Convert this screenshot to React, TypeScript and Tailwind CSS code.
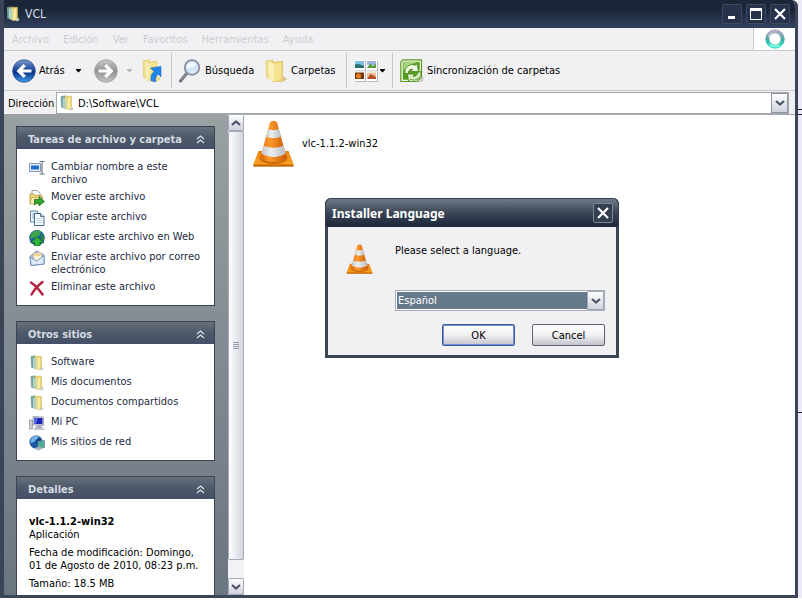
import React from "react";

type IconProps = { className?: string };

const Cone = ({ className = "" }: IconProps) => (
  <svg className={className} viewBox="0 0 41 47" aria-hidden="true">
    <defs>
      <linearGradient id="cone" x1="0" x2="1">
        <stop offset="0" stopColor="#d96a06" />
        <stop offset="0.35" stopColor="#fb9a2c" />
        <stop offset="1" stopColor="#c95a04" />
      </linearGradient>
      <linearGradient id="coneBase" x1="0" x2="0" y1="0" y2="1">
        <stop offset="0" stopColor="#e98312" />
        <stop offset="1" stopColor="#fba524" />
      </linearGradient>
      <linearGradient id="coneBand" x1="0" x2="1">
        <stop offset="0" stopColor="#c3c7ca" />
        <stop offset="0.4" stopColor="#eceeef" />
        <stop offset="1" stopColor="#b9bdc1" />
      </linearGradient>
    </defs>
    <path d="M5.500 31h30L40.500 44v2.500H.500V44z" fill="url(#coneBase)" />
    <path d="M.5 44.500h40v2H.5z" fill="#c0640a" />
    <path d="M7.500 35c0 9 26 9 26 0l1 3c-1 8-27 8-28 0z" fill="#cf6a0a" />
    <path d="M16.800 3c1-3 6.400-3 7.400 0l9.300 34c-2 6-24 6-26 0z" fill="url(#cone)" />
    <path d="M15.200 9c3 1.500 7.700 1.500 10.600 0l2.200 7.500c-4 2.300-11 2.300-15 0z" fill="url(#coneBand)" />
    <path d="M10.600 25.500c5 3 15 3 19.900 0l2.200 8c-6 4.500-18 4.500-24.200 0z" fill="url(#coneBand)" />
  </svg>
);

const OpenFolder = ({ className = "" }: IconProps) => (
  <svg className={className} viewBox="0 0 16 16" aria-hidden="true">
    <path d="M2 1.500 6 .8v12.500l-3.500-1z" fill="#79a692" stroke="#5f8c80" strokeWidth=".5" />
    <path d="M4 2.500 6.500 3v10.500L4 12.500z" fill="#a9d3e6" />
    <path d="M6 1.200h6.500V12l1.800 1.500-1.800 1.500L6 13.500z" fill="#eed374" stroke="#cdb05a" strokeWidth=".5" />
    <path d="M6 2.500 8.500 4v11L6 13.500z" fill="#c9d9a2" />
    <path d="M8.500 4 11 2.500v10.500l-2.500 2z" fill="#fbeda0" />
    <path d="M11 12.500h2.800v2.300H11z" fill="#bcd3d4" />
  </svg>
);

const BigFolder = ({ className = "" }: IconProps) => (
  <svg className={className} viewBox="0 0 22 24" aria-hidden="true">
    <path d="M1 2l7-1.200V20l-3 .5L1.500 18z" fill="#f3de88" stroke="#dcc56c" strokeWidth=".6" />
    <path d="M7 3.500 17.500 2v15l4 3-4 2.500L7 22.500z" fill="#efd878" stroke="#d3b758" strokeWidth=".6" />
    <path d="M3 3.500C6 3 8 4 9 5.500v17L4 21z" fill="#faf0b8" />
    <path d="M9 5.500 16 4v15l-7 3.500z" fill="#f6e490" />
    <path d="M17.500 17l4 3-4 2.500z" fill="#d9bb98" />
  </svg>
);

const UpFolder = ({ className = "" }: IconProps) => (
  <svg className={className} viewBox="0 0 20 24" aria-hidden="true">
    <path d="M1 2l6-1.200V20l-2.500.5L1.500 18z" fill="#f3de88" stroke="#dcc56c" strokeWidth=".6" />
    <path d="M6 3.500 15 2v15l3 3-3 2H6z" fill="#f6e38e" stroke="#d3b758" strokeWidth=".6" />
    <path d="M3 3.500C5 3 7 4 7.500 5.500v17L4 21z" fill="#f4edb4" />
    <path d="M8.500 9 19 7.500v10.500l-3-3c-2 2-2.500 4-2.500 8l-4.500-1.500c-.5-4 .5-7 3-9z" fill="#1e86ea" stroke="#0f5cb4" strokeWidth=".5" />
  </svg>
);

const RoundArrow = ({ className = "", forward = false }: IconProps & { forward?: boolean }) => (
  <svg className={className} viewBox="0 0 24 24" aria-hidden="true">
    <defs>
      <linearGradient id="backBall" x1="0" x2="0" y1="0" y2="1">
        <stop offset="0" stopColor="#7f9cca" />
        <stop offset="0.4" stopColor="#2450a0" />
        <stop offset="0.55" stopColor="#0a2f84" />
        <stop offset="1" stopColor="#3fa4f4" />
      </linearGradient>
      <linearGradient id="forwardBall" x1="0" x2="0" y1="0" y2="1">
        <stop offset="0" stopColor="#cacaca" />
        <stop offset="0.5" stopColor="#929292" />
        <stop offset="1" stopColor="#c4c4c4" />
      </linearGradient>
    </defs>
    <circle cx="12" cy="12" r="11.300" fill={forward ? "url(#forwardBall)" : "url(#backBall)"} stroke={forward ? "#9a9a9a" : "#2c4f8f"} strokeWidth=".8" />
    <path
      d={forward ? "M12.500 5 19.500 12l-7 7-2.400-2.200 3.200-3.200H4.500v-3.200h8.800l-3.200-3.200z" : "M11.500 5 4.500 12l7 7 2.400-2.200-3.200-3.200h8.800v-3.200h-8.800l3.200-3.200z"}
      fill="#fff"
    />
  </svg>
);

const Magnifier = ({ className = "" }: IconProps) => (
  <svg className={className} viewBox="0 0 22 24" aria-hidden="true">
    <path d="m8 14-6.500 8" stroke="#6d7076" strokeWidth="3" strokeLinecap="round" />
    <path d="m8 14-5.500 6.500" stroke="#a9abb0" strokeWidth="1" strokeLinecap="round" />
    <circle cx="13" cy="8.500" r="7.300" fill="#d4e7fa" stroke="#8d8f9c" strokeWidth="1.800" />
    <path d="M8 8.500a5 5 0 0 1 9-3c-2 2.500-5 3.500-9 3z" fill="#f5faff" />
  </svg>
);

const Views = ({ className = "" }: IconProps) => (
  <svg className={className} viewBox="0 0 24 22" aria-hidden="true">
    <path d="M1 1h11v10.500H1zM13 1h11v10.500H13zM1 12h11v10H1zM13 12h11v10H13z" fill="#b9b9bb" />
    <path d="M0 0h11v10.500H0zM12 0h11v10.500H12zM0 11.500h11V21H0zM12 11.500h11V21H12z" fill="#fff" />
    <path d="M1 1h9v4H1z" fill="#7cc3e0" />
    <path d="M1 4.500 4 4l6 1.500v2.500H1z" fill="#23706e" />
    <path d="M13 1h9v4h-9z" fill="#9db4e0" />
    <path d="m13 8 3.500-4.500L19 6l3-2.500V8z" fill="#589c3c" />
    <path d="M1 12.500h9V19H1z" fill="#7a3410" />
    <circle cx="4.500" cy="16" r="2.500" fill="#dd8420" />
    <path d="M13 12.500h9V19h-9z" fill="#ecc39c" />
    <path d="m13 19 3.500-5 5.500 3v2z" fill="#b9502a" />
  </svg>
);

const Sync = ({ className = "" }: IconProps) => (
  <svg className={className} viewBox="0 0 24 24" aria-hidden="true">
    <path d="M3 .8h18.500V18L17 22.500H.8V3z" fill="#f3f9e8" stroke="#5c9a24" strokeWidth="1.200" />
    <path d="M3.500 2.800h16.200V17l-3 3.800H2.800V3.500z" fill="#57a01f" />
    <path d="M3.500 3h16c-7 1-12 4-16 9z" fill="#a6d37a" />
    <path d="M5 14.500a7.500 7.500 0 0 1 10.500-8.300L17 4.500l1.500 8h-8l2-2.500a3.800 3.800 0 0 0-4 4.500z" fill="#eef7df" stroke="#397a12" strokeWidth=".7" />
    <path d="M21 12.500a7.500 7.500 0 0 1-10.500 8L8.500 22.500 7.500 15h7.500l-2 2.300a3.800 3.800 0 0 0 4.500-3.800z" fill="#d9edc0" stroke="#397a12" strokeWidth=".7" />
    <path d="m23.500 17-6 6.500 5.500-1z" fill="#c8c8c8" />
  </svg>
);

const Throbber = ({ className = "" }: IconProps) => (
  <svg className={className} viewBox="0 0 20 20" aria-hidden="true">
    <defs>
      <linearGradient id="ring" x1="0" x2="0" y1="0" y2="1">
        <stop offset="0" stopColor="#b3adc6" />
        <stop offset="0.45" stopColor="#55a3a2" />
        <stop offset="0.6" stopColor="#3db5ab" />
        <stop offset="1" stopColor="#3ce8cc" />
      </linearGradient>
    </defs>
    <circle cx="10" cy="10" r="7.700" fill="#fff" stroke="url(#ring)" strokeWidth="4" />
    <path d="M3.500 8a7 7 0 0 1 4-4.200" fill="none" stroke="#dcdce8" strokeWidth="1.200" />
    <path d="M5 15.500a7.500 7.500 0 0 0 9 .5" fill="none" stroke="#a8fbe8" strokeWidth="1.200" />
  </svg>
);

const Rename = ({ className = "" }: IconProps) => (
  <svg className={className} viewBox="0 0 16 16" aria-hidden="true">
    <path d="M.5 3.500h11v8H.5z" fill="#e8eef7" stroke="#8497b8" />
    <path d="M2 5.500h8v4H2z" fill="#1f6fd0" />
    <path d="M10.500 1.500h2l.5.500.5-.5h2M13 2v11.500M10.500 14h2l.5-.5.5.5h2" fill="none" stroke="#6a7484" strokeWidth="1.200" />
  </svg>
);

const Move = ({ className = "" }: IconProps) => (
  <svg className={className} viewBox="0 0 16 16" aria-hidden="true">
    <path d="M3 .5h5l3 2.500v6H3z" fill="#fff" stroke="#8a8f98" strokeWidth=".8" />
    <path d="M1 4h4l1 1.500h7v8H1z" fill="#f1da78" stroke="#b3923a" strokeWidth=".8" />
    <path d="M2.500 7.500H14l-2 6.500H1z" fill="#fbeeae" stroke="#b3923a" strokeWidth=".6" />
    <path d="M5.500 9.500H10V6.500l5.500 5-5.500 4.300v-2.500H7.500L5.500 15z" fill="#2fa52e" stroke="#13651a" strokeWidth=".7" />
  </svg>
);

const Copy = ({ className = "" }: IconProps) => (
  <svg className={className} viewBox="0 0 16 16" aria-hidden="true">
    <path d="M1.500 1h7v11h-7z" fill="#e4f1fb" stroke="#55799f" strokeWidth=".9" />
    <path d="M3 4h4M3 6h4M3 8h4" stroke="#8fb4d6" />
    <path d="M5.500 3.500h6l3.500 3v9H5.500z" fill="#f4fafe" stroke="#36587e" strokeWidth=".9" />
    <path d="M11.500 3.500v3H15" fill="#b5d2ea" stroke="#36587e" strokeWidth=".8" />
    <path d="M7 8.500h6M7 10.500h6M7 12.500h6" stroke="#c3d9ec" />
  </svg>
);

const Publish = ({ className = "" }: IconProps) => (
  <svg className={className} viewBox="0 0 16 16" aria-hidden="true">
    <circle cx="8" cy="7.800" r="7.500" fill="#1d5fae" stroke="#173f6d" strokeWidth=".5" />
    <path d="M2 4c3-4 8-4 10-2.500L11 5 8 7 4 8 1 9z" fill="#3fa54a" />
    <path d="m12 4 3 2v4l-3 1z" fill="#2c8a3c" />
    <path d="M8 6.500 15 13l-4-.5V16H5.500v-3.500L1.500 13z" fill="#2fb13a" stroke="#0e5d1c" strokeWidth=".7" />
  </svg>
);

const Mail = ({ className = "" }: IconProps) => (
  <svg className={className} viewBox="0 0 16 16" aria-hidden="true">
    <path d="M1 6.500 7.500 1l7.500 4v9L2 15.500z" fill="#a9c4ea" stroke="#6180ad" strokeWidth=".8" />
    <path d="M4 3.500 12 2.500l1 7-8 2z" fill="#fff6d2" stroke="#cda765" strokeWidth=".6" />
    <path d="M5.500 5h6" stroke="#e2ad55" />
    <path d="m1 7 6.500 4L15 5.500V14L2 15.500z" fill="#dce9fa" stroke="#6180ad" strokeWidth=".8" />
  </svg>
);

const Delete = ({ className = "" }: IconProps) => (
  <svg className={className} viewBox="0 0 16 16" aria-hidden="true">
    <path d="M2 2.500C6 5 10 9.500 13.500 14.500M13.500 2C9 5.500 5 10 2.500 14.500" fill="none" stroke="#b5213f" strokeWidth="2.400" strokeLinecap="round" />
  </svg>
);

const Computer = ({ className = "" }: IconProps) => (
  <svg className={className} viewBox="0 0 16 16" aria-hidden="true">
    <path d="M.5 5h3v9h-3z" fill="#c9ccd3" stroke="#7d828c" strokeWidth=".6" />
    <path d="M4 1.500 14.500 2v8.500L4 10z" fill="#dfe2ea" stroke="#878b99" strokeWidth=".7" />
    <path d="m5 2.700 8.500.3v6.300L5 9z" fill="#1a26b8" />
    <path d="m5 2.700 4 .1L7 9H5z" fill="#4f66e2" />
    <path d="M7.500 10.500h4l2.500 3-8 .5z" fill="#a8acb8" />
    <path d="m5 13.500 9-.5 1.500 1.500H5z" fill="#d9dbe2" stroke="#8d919c" strokeWidth=".4" />
  </svg>
);

const Network = ({ className = "" }: IconProps) => (
  <svg className={className} viewBox="0 0 16 16" aria-hidden="true">
    <circle cx="7" cy="7" r="6.300" fill="#1c58a8" stroke="#16386b" strokeWidth=".5" />
    <path d="M2 3.500C5 0 8 1 10 2L7 5 5 7 1 8z" fill="#6fb3e8" />
    <path d="m8 4 4-.5L11 8l-4 2z" fill="#123c80" />
    <path d="m9 6.500 6.500-1v7L9 13.500z" fill="#4fae96" stroke="#6c8d94" strokeWidth=".8" />
    <path d="m5.500 13 5-1.500 3 2.500-5 1.500z" fill="#a7b6c6" />
  </svg>
);

const Caret = ({ className = "" }: IconProps) => (
  <svg className={className} viewBox="0 0 7 4" fill="currentColor" aria-hidden="true">
    <path d="M1 0h5v1L3.500 3.500 1 1z" />
  </svg>
);

const Chevron = ({ className = "" }: IconProps) => (
  <svg className={className} viewBox="0 0 10 6" fill="none" stroke="#4a5468" strokeWidth="2.200" aria-hidden="true">
    <path d="m1 1 4 3.500L9 1" />
  </svg>
);

const CloseGlyph = ({ className = "" }: IconProps) => (
  <svg className={className} viewBox="0 0 12 12" fill="none" stroke="#fff" strokeWidth="2.200" aria-hidden="true">
    <path d="m1 1 10 10M11 1 1 11" />
  </svg>
);

const menus = ["Archivo", "Edición", "Ver", "Favoritos", "Herramientas", "Ayuda"];

const tasks = [
  { label: "Cambiar nombre a este archivo", icon: Rename },
  { label: "Mover este archivo", icon: Move },
  { label: "Copiar este archivo", icon: Copy },
  { label: "Publicar este archivo en Web", icon: Publish },
  { label: "Enviar este archivo por correo electrónico", icon: Mail },
  { label: "Eliminar este archivo", icon: Delete },
];

const places = [
  { label: "Software", icon: OpenFolder },
  { label: "Mis documentos", icon: OpenFolder },
  { label: "Documentos compartidos", icon: OpenFolder },
  { label: "Mi PC", icon: Computer },
  { label: "Mis sitios de red", icon: Network },
];

const Panel = ({ title, children }: { title: string; children: React.ReactNode }) => (
  <section className="shrink-0 border border-[#3a4454] bg-white">
    <h2>
      <button className="flex h-[22px] w-full items-center justify-between bg-linear-to-b from-[#67717c] via-[#4d5868] to-[#445068] pr-[9px] pl-[11px] pt-[2px] text-[11px] font-bold text-[#d5dbe2]">
        {title}
        <svg className="h-[9px] w-[9px]" viewBox="0 0 9 9" fill="none" stroke="#dfe4ea" strokeWidth="1.200" aria-hidden="true">
          <path d="m1 4 3.500-3L8 4M1 8l3.500-3L8 8" />
        </svg>
      </button>
    </h2>
    {children}
  </section>
);

const LinkList = ({ items }: { items: { label: string; icon: React.FC<IconProps> }[] }) => (
  <ul className="flex flex-col gap-1 pt-[11px] pr-2 pb-[9px] pl-3">
    {items.map(({ label, icon: Icon }) => (
      <li key={label}>
        <a href="#" className="flex gap-[6px] text-[#1d2a3f]">
          <Icon className="size-4 shrink-0" />
          <span>{label}</span>
        </a>
      </li>
    ))}
  </ul>
);

const Separator = () => <div className="h-[35px] w-px bg-[#c6c8cc]" />;

const titleButton = "flex size-5 items-center justify-center rounded-[2px] border border-[#3d4a62] bg-[#25324a]";
const scrollButton = "flex h-[17px] shrink-0 items-center justify-center rounded-[1px] border border-[#a3a9b8] bg-linear-to-b from-white to-[#cfd2dd]";
const dialogButton = "h-[22px] w-[73px] rounded-[2px] border bg-linear-to-b from-white via-[#f1f1f4] to-[#c3c5cd]";

const InstallerDialog = () => (
  <div
    role="dialog"
    aria-labelledby="installer-title"
    className="absolute top-[198px] left-[325px] w-[294px] rounded-t-md border-x-[3px] border-b-[3px] border-[#3c4654] bg-[#f1f1f4]"
  >
    <div className="-mx-[3px] flex h-[29px] items-center justify-between rounded-t-md border border-b-0 border-[#333d4c] bg-linear-to-b from-[#707984] via-[#3a4556] to-[#1b2739] pr-[5px] pl-[6px]">
      <h1 id="installer-title" className="font-['Noto_Sans'] text-[12px] font-bold text-white">
        Installer Language
      </h1>
      <button aria-label="Close" className="flex size-5 items-center justify-center rounded-[2px] border border-[#7b8593] bg-[#333e4f]">
        <CloseGlyph className="size-3" />
      </button>
    </div>
    <form className="flex gap-[22px] pt-[17px] pr-[11px] pb-[9px] pl-[18px]" onSubmit={(e) => e.preventDefault()}>
      <Cone className="h-[30px] w-[27px]" />
      <div className="flex-1">
        <label htmlFor="language" className="block">
          Please select a language.
        </label>
        <div className="relative mt-[33px]">
          <select
            id="language"
            className="block h-[21px] w-full appearance-none border border-[#a3abb8] bg-[#66798b] px-[2px] text-white shadow-[inset_0_0_0_1px_#fff]"
          >
            <option>Español</option>
          </select>
          <span className="pointer-events-none absolute inset-y-px right-px flex w-[17px] items-center justify-center border border-[#a3a9b8] bg-linear-to-b from-white to-[#cfd2dd]">
            <Chevron className="h-[6px] w-[10px]" />
          </span>
        </div>
        <div className="mt-[13px] flex justify-end gap-[17px]">
          <button type="submit" className={`${dialogButton} border-[#3d5a94] shadow-[inset_0_0_0_1px_#6f92d6]`}>
            OK
          </button>
          <button type="button" className={`${dialogButton} border-[#5c6370]`}>
            Cancel
          </button>
        </div>
      </div>
    </form>
  </div>
);

export default function App() {
  return (
    <div className="flex h-screen overflow-hidden bg-white font-['DejaVu_Sans_Condensed','DejaVu_Sans',sans-serif] text-[11px] leading-[13px] text-black">
      <div className="mb-[3px] flex min-w-0 flex-1 flex-col overflow-hidden rounded-tr-md border-r-[3px] border-b-[3px] border-l-[4px] border-[#3b455a]">
        {/* Title bar */}
        <header className="-mx-[3px] flex h-7 shrink-0 items-center justify-between bg-linear-to-b from-[#1b2739] from-40% to-[#344262] pr-2 pl-1">
          <div className="flex items-center gap-1">
            <OpenFolder className="size-4" />
            <span className="text-[12px] text-[#d7dde6]">VCL</span>
          </div>
          <div className="flex gap-1">
            <button aria-label="Minimizar" className={titleButton}>
              <svg className="size-3" viewBox="0 0 12 12" aria-hidden="true">
                <path d="M2 8h7v3H2z" fill="#fff" />
              </svg>
            </button>
            <button aria-label="Maximizar" className={titleButton}>
              <svg className="size-3" viewBox="0 0 12 12" aria-hidden="true">
                <path d="M.5 1v10.500h11V1z" fill="none" stroke="#fff" />
                <path d="M0 0h12v3H0z" fill="#fff" />
              </svg>
            </button>
            <button aria-label="Cerrar" className={titleButton}>
              <CloseGlyph className="size-3" />
            </button>
          </div>
        </header>

        {/* Menu bar */}
        <nav className="flex h-[23px] shrink-0 border-b border-[#c6c8cc] bg-[#f1f1f4]">
          <div className="flex flex-1 items-center gap-[14px] pl-2 text-[#cdcdd0]">
            {menus.map((menu) => (
              <button key={menu}>{menu}</button>
            ))}
          </div>
          <div className="flex w-[42px] items-center justify-center border-l border-[#c6c8cc] bg-white">
            <Throbber className="size-5" />
          </div>
        </nav>

        {/* Toolbar */}
        <div className="flex h-10 shrink-0 items-center border-b border-[#c6c8cc] bg-[#f1f1f4] pl-2">
          <button className="flex w-[82px] items-center gap-[3px]">
            <RoundArrow className="size-6" />
            <span className="flex-1 text-left">Atrás</span>
            <Caret className="mr-3 h-1 w-[7px]" />
          </button>
          <button aria-label="Adelante" className="flex w-12 items-center gap-2 text-[#b5b5b8]">
            <RoundArrow className="size-6" forward />
            <Caret className="h-1 w-[7px]" />
          </button>
          <button aria-label="Arriba" className="w-[29px]">
            <UpFolder className="h-6 w-5" />
          </button>
          <Separator />
          <button className="ml-[7px] flex w-[86px] items-center gap-1">
            <Magnifier className="h-6 w-[22px]" />
            Búsqueda
          </button>
          <button className="flex w-[81px] items-center gap-1">
            <BigFolder className="h-6 w-[22px]" />
            Carpetas
          </button>
          <Separator />
          <button aria-label="Vistas" className="ml-[7px] flex w-[38px] items-center gap-px">
            <Views className="h-[22px] w-6" />
            <Caret className="h-1 w-[7px]" />
          </button>
          <Separator />
          <button className="ml-[7px] flex items-center gap-[3px]">
            <Sync className="size-6" />
            Sincronización de carpetas
          </button>
        </div>

        {/* Address bar */}
        <div className="flex h-[23px] shrink-0 items-center bg-[#f1f1f4] pt-px pr-[6px] pl-1">
          <label htmlFor="address" className="w-12">
            Dirección
          </label>
          <div className="flex h-[22px] flex-1 items-center border border-[#a3a7ae] bg-white pl-[2px]">
            <OpenFolder className="size-4" />
            <input id="address" className="min-w-0 flex-1 pl-[3px]" defaultValue="D:\Software\VCL" />
            <button aria-label="Mostrar direcciones" className="flex h-5 w-[17px] items-center justify-center border border-[#8f95a3] bg-linear-to-b from-white to-[#cfd2dd]">
              <Chevron className="h-[6px] w-[10px]" />
            </button>
          </div>
        </div>

        <div className="flex min-h-0 flex-1">
          {/* Task pane */}
          <aside className="flex w-[224px] shrink-0 flex-col gap-[15px] overflow-hidden bg-linear-to-b from-[#9aa1a3] to-[#6b7580] pt-3 pr-[13px] pl-3">
            <Panel title="Tareas de archivo y carpeta">
              <LinkList items={tasks} />
            </Panel>
            <Panel title="Otros sitios">
              <LinkList items={places} />
            </Panel>
            <Panel title="Detalles">
              <div className="flex flex-col gap-[5px] pt-4 pb-4 pl-3">
                <div>
                  <p className="font-bold">vlc-1.1.2-win32</p>
                  <p>Aplicación</p>
                </div>
                <p>
                  Fecha de modificación: Domingo,
                  <br />
                  01 de Agosto de 2010, 08:23 p.m.
                </p>
                <p>Tamaño: 18.5 MB</p>
              </div>
            </Panel>
          </aside>

          {/* Scroll bar */}
          <div className="flex w-4 shrink-0 flex-col bg-[#f1f1f6]">
            <button aria-label="Subir" className={scrollButton}>
              <Chevron className="h-[6px] w-[10px] rotate-180" />
            </button>
            <div className="flex flex-1 flex-col items-center justify-center gap-px rounded-[2px] border border-[#a3a9b8] bg-linear-to-r from-white to-[#d3d6e2]">
              <i className="h-px w-[6px] bg-[#9298a8]" />
              <i className="h-px w-[6px] bg-[#9298a8]" />
              <i className="h-px w-[6px] bg-[#9298a8]" />
              <i className="h-px w-[6px] bg-[#9298a8]" />
            </div>
            <div className="h-[18px] shrink-0" />
            <button aria-label="Bajar" className={scrollButton}>
              <Chevron className="h-[6px] w-[10px]" />
            </button>
          </div>

          {/* File list */}
          <main className="flex-1 border-t border-[#a3a7ae] bg-white pt-[5px] pl-[9px]">
            <button className="flex items-center gap-2">
              <Cone className="h-[47px] w-[41px]" />
              vlc-1.1.2-win32
            </button>
          </main>
        </div>
      </div>

      {/* Desktop showing past the window edge */}
      <div className="mb-[3px] flex w-1 shrink-0 flex-col bg-[#ebeaf6]">
        <div className="mt-[109px] h-[6px] border-y border-[#1b2033]" />
        <div className="mt-[297px] h-px bg-[#1b2033]" />
      </div>

      <InstallerDialog />
    </div>
  );
}
